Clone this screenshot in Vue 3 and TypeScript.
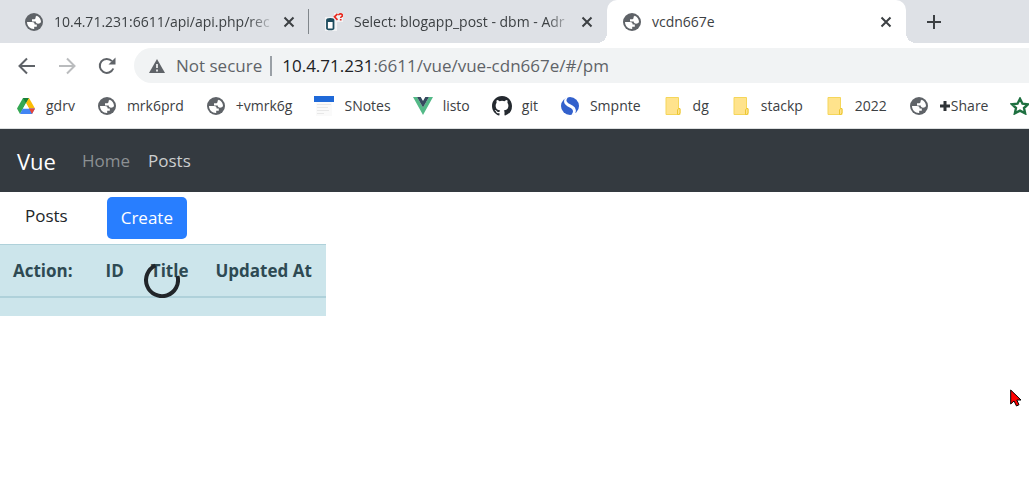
<script setup lang="ts">
interface Bookmark {
  label: string
  icon: string
}

const bookmarks: Bookmark[] = [
  { label: 'gdrv', icon: 'drive' },
  { label: 'mrk6prd', icon: 'globe' },
  { label: '+vmrk6g', icon: 'globe' },
  { label: 'SNotes', icon: 'notes' },
  { label: 'listo', icon: 'vue' },
  { label: 'git', icon: 'github' },
  { label: 'Smpnte', icon: 'simplenote' },
  { label: 'dg', icon: 'folder' },
  { label: 'stackp', icon: 'folder' },
  { label: '2022', icon: 'folder' },
  { label: 'Share', icon: 'globe' },
  { label: '', icon: 'star' },
]

const columns: string[] = ['Action:', 'ID', 'Title', 'Updated At']
</script>

<template>
  <div class="browser">
    <svg class="defs" width="0" height="0" aria-hidden="true">
      <symbol id="globe" viewBox="0 0 18 18">
        <circle cx="9" cy="9" r="9" fill="#5f6368" />
        <path d="M2 9h5c1.700 0 2.600.7 2.600 2.100v.5h2.200v2.200H9.200v2.200C5.200 16.200 2.100 13.100 2 9z" fill="#fff" />
        <path d="M11.700 2.700c2.600 1.100 4.300 3.500 4.300 6.300-.6 1.100-1.600 1.700-2.900 1.700-1.500 0-2.400-.8-2.400-2.200H7V6.300h1.800c1.200 0 1.800-.6 1.800-1.800v-.8z" fill="#fff" />
      </symbol>
      <symbol id="close" viewBox="0 0 12 12">
        <path d="M1.500 1.500l9 9m0-9l-9 9" stroke="#3c4043" stroke-width="2" fill="none" />
      </symbol>
      <symbol id="drive" viewBox="0 0 18 18">
        <path d="M6 1h6L9 6.300 3 17 0 11.500z" fill="#34a853" />
        <path d="M6 1h6L9 6.300z" fill="#188038" />
        <path d="M12 1l6 10.500h-6L9 6.300z" fill="#fbbc04" />
        <path d="M5.800 11.500H18L15 17H3z" fill="#4285f4" />
        <path d="M12 11.500h6L15 17z" fill="#ea4335" />
        <path d="M9 6.300l3 5.200H6z" fill="#fff" />
      </symbol>
      <symbol id="notes" viewBox="0 0 20 20">
        <path d="M2 6h16v14H2z" fill="#fafafa" />
        <path d="M0 0h20v6H0z" fill="#1f69d8" />
        <path d="M3 8.500h14M3 11.500h11M3 14.500h12M3 17.500h7" stroke="#e8e8e8" />
      </symbol>
      <symbol id="vue" viewBox="0 0 20 18">
        <path d="M0 0h4l6 10.500L16 0h4L10 18z" fill="#53b987" />
        <path d="M4 0h3.700L10 4l2.300-4H16l-6 10.500z" fill="#35495e" />
      </symbol>
      <symbol id="github" viewBox="0 0 16 16">
        <path fill="#24292f" d="M8 0C3.580 0 0 3.580 0 8c0 3.540 2.290 6.530 5.470 7.590.4.070.55-.17.55-.38 0-.19-.01-.82-.01-1.490-2.010.37-2.530-.49-2.690-.94-.09-.23-.48-.94-.82-1.130-.28-.15-.68-.52-.01-.53.63-.01 1.080.58 1.230.82.72 1.210 1.870.87 2.330.66.07-.52.28-.87.51-1.070-1.780-.2-3.640-.89-3.640-3.950 0-.87.31-1.590.82-2.150-.08-.2-.36-1.020.08-2.120 0 0 .67-.21 2.200.82a7.600 7.600 0 0 1 4 0c1.530-1.040 2.200-.82 2.200-.82.44 1.100.16 1.920.08 2.120.51.56.82 1.270.82 2.150 0 3.070-1.870 3.750-3.650 3.950.29.25.54.73.54 1.480 0 1.070-.01 1.930-.01 2.200 0 .21.15.46.55.38A8 8 0 0 0 16 8c0-4.420-3.580-8-8-8z" />
      </symbol>
      <symbol id="simplenote" viewBox="0 0 18 18">
        <circle cx="9" cy="9" r="9" fill="#3361cc" />
        <path d="M6.200 0C4 2.800 4.200 5.200 7 7l4.500 2.500c3 1.800 3.400 5 1.300 8M4.500 1.500C3.200 4.500 4 7 6.700 8.500l3.800 2.200c2.800 1.800 2.900 4.300.8 7.300" fill="none" stroke="#fff" stroke-width="1.500" />
      </symbol>
      <symbol id="folder" viewBox="0 0 16 18">
        <path d="M1 .5h12.500V12h1.500v5.500H1z" fill="#ffe38c" stroke="#f5d65a" />
        <path d="M12.500 17.500v-4.500l1-1.500h1.500v4.500l-1.200 1.500z" fill="#ffe38c" stroke="#ecc633" />
      </symbol>
      <symbol id="star" viewBox="0 0 20 18">
        <path d="M10 1.800l2.500 4.900 5.500.6-4 3.700 1.100 5.300L10 13.600l-5.100 2.700L6 11 2 7.300l5.500-.6z" fill="none" stroke="#1e7040" stroke-width="2.400" />
      </symbol>
    </svg>

    <div class="tabs">
      <div class="tab first">
        <svg class="fav"><use href="#globe" /></svg>
        <span class="tab-title faded">10.4.71.231:6611/api/api.php/rec</span>
        <button class="close" aria-label="Close tab"><svg><use href="#close" /></svg></button>
      </div>
      <div class="tab second">
        <svg class="fav" viewBox="0 0 18 18">
          <path d="M0 4h9V0h9v9h-6v9H0z" fill="#fff" opacity=".6" />
          <path d="M2 7v8.500c0 1.200 6.500 1.200 6.500 0V7M2 7c0-1.500 6.500-1.500 6.500 0S2 8.500 2 7z" fill="#fff" stroke="#1d4c5e" stroke-width="1.800" />
          <path d="M12.500.8L9.500 3.800l3 3M13.800 2.300c0-2 3.600-2 3.600.2 0 1.300-1.700 1-1.700 2.600M15.700 6v1.500" fill="none" stroke="#e8281e" stroke-width="1.700" />
        </svg>
        <span class="tab-title faded">Select: blogapp_post - dbm - Adr</span>
        <button class="close" aria-label="Close tab"><svg><use href="#close" /></svg></button>
      </div>
      <div class="tab active">
        <svg class="fav"><use href="#globe" /></svg>
        <span class="tab-title">vcdn667e</span>
        <button class="close" aria-label="Close tab"><svg><use href="#close" /></svg></button>
      </div>
      <button class="new-tab" aria-label="New tab">
        <svg viewBox="0 0 16 16"><path d="M8 1v14M1 8h14" stroke="#3c4043" stroke-width="2" /></svg>
      </button>
    </div>

    <div class="toolbar">
      <button class="tool" aria-label="Back">
        <svg viewBox="0 0 18 18"><path d="M17 9H2M9 1.500L1.500 9 9 16.500" fill="none" stroke="#5f6368" stroke-width="2" /></svg>
      </button>
      <button class="tool" aria-label="Forward" disabled>
        <svg viewBox="0 0 18 18"><path d="M1 9h15M9 1.500L16.500 9 9 16.500" fill="none" stroke="#babcbe" stroke-width="2" /></svg>
      </button>
      <button class="tool" aria-label="Reload">
        <svg viewBox="0 0 18 18"><path d="M15.300 11.500A7 7 0 1 1 14 4.200" fill="none" stroke="#5f6368" stroke-width="2" /><path d="M17.500.5v7h-7z" fill="#5f6368" /></svg>
      </button>
      <div class="omnibox">
        <svg class="warn" viewBox="0 0 16 14"><path d="M8 0l8 14H0z" fill="#5f6368" /><path d="M8 5v4M8 10.500v2" stroke="#fff" stroke-width="1.600" /></svg>
        <span class="secure">Not secure</span>
        <span class="bar"></span>
        <span class="url"><b>10.4.71.231</b>:6611/vue/vue-cdn667e/#/pm</span>
      </div>
    </div>

    <nav class="bookmarks" aria-label="Bookmarks">
      <a v-for="(b, i) in bookmarks" :key="i" href="#" class="bookmark" :aria-label="b.label || 'Starred'">
        <svg class="mark" :class="b.icon"><use :href="'#' + b.icon" /></svg>
        <span v-if="b.label" class="label"><svg v-if="b.label === 'Share'" class="plus" viewBox="0 0 12 12"><path d="M6 1v10M1 6h10" stroke="#2f3337" stroke-width="3" /></svg>{{ b.label }}</span>
      </a>
    </nav>

    <nav class="navbar">
      <a href="#" class="brand">Vue</a>
      <a href="#" class="nav-link dim">Home</a>
      <a href="#" class="nav-link">Posts</a>
    </nav>

    <main>
      <div class="heading">
        <span class="title">Posts</span>
        <button class="create">Create</button>
      </div>
      <div class="table-area">
        <table>
          <thead>
            <tr><th v-for="c in columns" :key="c" scope="col">{{ c }}</th></tr>
          </thead>
          <tbody>
            <tr><td :colspan="columns.length"></td></tr>
          </tbody>
        </table>
        <svg class="spinner" viewBox="0 0 36 36" role="img" aria-label="Loading"><path d="M11.500 3.500A16 16 0 1 0 33.500 14" fill="none" stroke="#212529" stroke-width="4" /></svg>
      </div>
    </main>
    <svg class="cursor" viewBox="0 0 12 18" aria-hidden="true"><path d="M.7 1v14l3.300-3 2.500 5 2.500-1.300L6.800 11H11z" fill="#f00" stroke="#000" /></svg>
  </div>
</template>

<style>
body {
  margin: 0;
  background: #fff;
}
</style>

<style scoped>
.browser {
  position: relative;
  min-height: 100vh;
  overflow: hidden;
  font-family: "Open Sans", "Noto Sans", sans-serif;
  font-size: 17px;
  color: #212529;
}
.defs {
  position: absolute;
}
svg {
  display: block;
  flex: none;
}
button {
  padding: 0;
  border: 0;
  background: none;
  font: inherit;
}
a {
  color: inherit;
  text-decoration: none;
}
.tabs {
  display: flex;
  height: 43px;
  background: #dee1e6;
}
.tab {
  position: relative;
  box-sizing: border-box;
  display: flex;
  align-items: center;
  flex: 0 1 299px;
  min-width: 0;
  padding: 0 14px 0 16px;
  font-size: 14px;
  line-height: 20px;
  color: #3c4043;
}
.first {
  flex-basis: 309px;
  padding-left: 25px;
}
.first::after {
  content: "";
  position: absolute;
  top: 9px;
  bottom: 9px;
  right: 0;
  width: 1px;
  background: #80868b;
}
.second {
  flex-basis: 298px;
  border-radius: 0 0 10px 0;
}
.active {
  background: #fff;
  border-radius: 10px 10px 0 0;
}
.active::before,
.active::after {
  content: "";
  position: absolute;
  bottom: 0;
  width: 10px;
  height: 10px;
}
.active::before {
  right: 100%;
  background: radial-gradient(circle at 0 0, #dee1e6 10px, #fff 10px);
}
.active::after {
  left: 100%;
  background: radial-gradient(circle at 100% 0, #dee1e6 10px, #fff 10px);
}
.fav {
  width: 18px;
  height: 18px;
}
.tab-title {
  flex: 1;
  min-width: 0;
  margin: 0 8px 0 11px;
  white-space: nowrap;
}
.faded {
  mask-image: linear-gradient(to right, #000 calc(100% - 26px), transparent);
}
.close svg {
  width: 12px;
  height: 12px;
}
.new-tab {
  margin-left: 20px;
}
.new-tab svg {
  width: 16px;
  height: 16px;
}
.toolbar {
  display: flex;
  align-items: center;
  gap: 22px;
  padding: 5px 0 0 18px;
}
.tool svg {
  width: 18px;
  height: 18px;
}
.omnibox {
  display: flex;
  align-items: center;
  flex: 1;
  height: 35px;
  margin-left: -4px;
  padding-left: 15px;
  border-radius: 18px 0 0 18px;
  background: #f1f3f4;
  color: #5f6368;
  white-space: nowrap;
}
.warn {
  width: 16px;
  height: 14px;
}
.secure {
  margin-left: 11px;
}
.bar {
  width: 2px;
  height: 20px;
  margin: 0 10px 0 8px;
  background: #9aa0a6;
}
.url b {
  font-weight: 400;
  color: #202124;
}
.bookmarks {
  display: flex;
  align-items: center;
  gap: 22px;
  height: 45px;
  padding-left: 16px;
  font-size: 14px;
  color: #3c4043;
}
.bookmark {
  display: flex;
  align-items: center;
  gap: 10px;
  white-space: nowrap;
}
.mark {
  width: 20px;
  height: 18px;
}
.notes,
.github {
  height: 20px;
}
.label {
  display: flex;
  align-items: center;
}
.plus {
  width: 12px;
  height: 12px;
}
.navbar {
  display: flex;
  align-items: center;
  height: 63px;
  border-top: 1px solid #dcdfe0;
  padding-left: 17px;
  background: #343a40;
  color: #cccecf;
}
.brand {
  margin-right: 26px;
  font-size: 22px;
  color: #fff;
}
.nav-link {
  margin-right: 18px;
}
.dim {
  color: #8c9093;
}
.heading {
  display: flex;
  align-items: flex-start;
  gap: 39px;
  padding: 5px 25px;
}
.title {
  line-height: 38px;
}
.create {
  height: 42px;
  padding: 0 14px 2px;
  border-radius: 5px;
  background: #287eff;
  color: #fff;
}
.table-area {
  position: relative;
}
table {
  border-collapse: collapse;
  background: #cce5eb;
  color: #2e4a53;
}
th {
  padding: 13px 14px 13px 13px;
  border-top: 1px solid #afd1da;
  border-bottom: 2px solid #afd1da;
  line-height: 25px;
  text-align: left;
  white-space: nowrap;
}
th:first-child {
  padding-right: 20px;
}
td {
  height: 18px;
  padding: 0;
}
.spinner {
  position: absolute;
  top: 18px;
  left: 144px;
  width: 36px;
  height: 36px;
}
.cursor {
  position: absolute;
  top: 389px;
  left: 1010px;
  width: 12px;
  height: 18px;
}
</style>
